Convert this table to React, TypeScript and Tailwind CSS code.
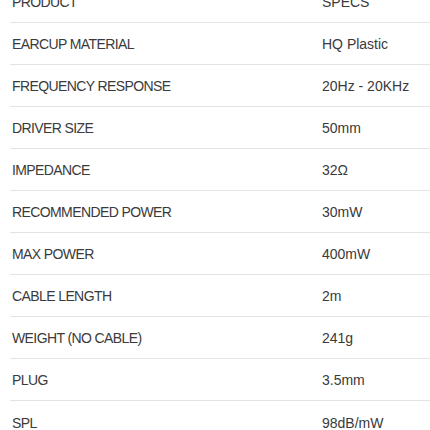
const specs: [string, string][] = [
  ["PRODUCT", "SPECS"],
  ["EARCUP MATERIAL", "HQ Plastic"],
  ["FREQUENCY RESPONSE", "20Hz - 20KHz"],
  ["DRIVER SIZE", "50mm"],
  ["IMPEDANCE", "32Ω"],
  ["RECOMMENDED POWER", "30mW"],
  ["MAX POWER", "400mW"],
  ["CABLE LENGTH", "2m"],
  ["WEIGHT (NO CABLE)", "241g"],
  ["PLUG", "3.5mm"],
  ["SPL", "98dB/mW"],
]

export default function App() {
  return (
    <div className="w-[430px] h-[430px] overflow-hidden bg-white font-['Liberation_Sans',Arial,sans-serif] text-[#3a3a3a]">
      <div className="-mt-[19px] ml-[10px]">
        {specs.map(([label, value], i) => (
          <div
            key={label}
            className={`grid grid-cols-[312px_1fr] h-[42px] items-center pt-[2px] ${i < specs.length - 1 ? "border-b border-[#e3e3e3]" : ""}`}
          >
            <span className="pl-[2px] text-[14px] tracking-[-0.6px] whitespace-nowrap">{label}</span>
            <span className="text-[14px] whitespace-nowrap">{value}</span>
          </div>
        ))}
      </div>
    </div>
  )
}
